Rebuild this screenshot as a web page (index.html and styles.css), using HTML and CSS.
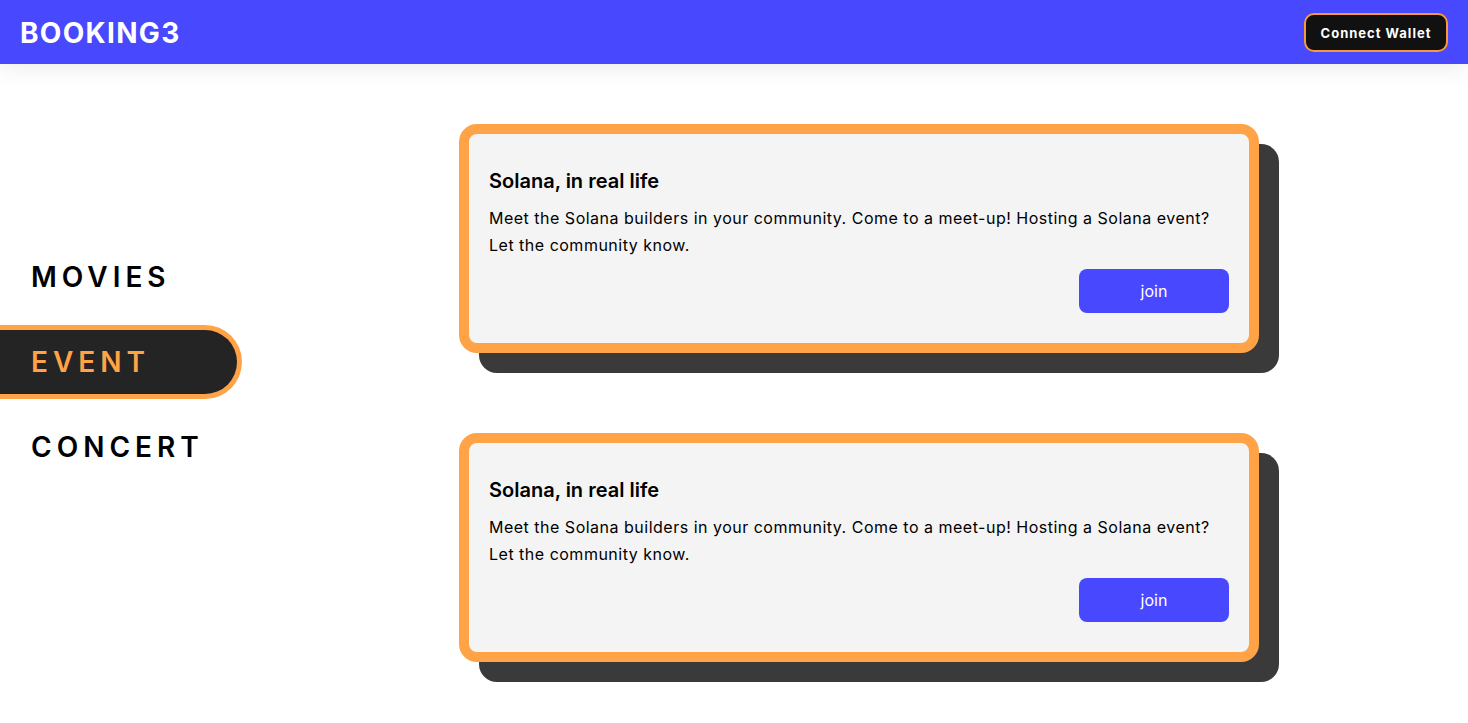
FILE: index.html
```html
<!DOCTYPE html>
<html lang="en">
<head>
<meta charset="utf-8">
<title>Booking3</title>
<link rel="stylesheet" href="styles.css">
</head>
<body>
<header class="topbar">
  <div class="logo">BOOKING3</div>
  <button class="wallet-btn">Connect Wallet</button>
</header>
<main class="layout">
  <nav class="sidebar">
    <div class="nav-item">MOVIES</div>
    <div class="nav-item active">EVENT</div>
    <div class="nav-item">CONCERT</div>
  </nav>
  <section class="cards">
    <article class="card">
      <h2 class="card-title">Solana, in real life</h2>
      <p class="card-text">Meet the Solana builders in your community. Come to a meet-up! Hosting a Solana event? Let the community know.</p>
      <div class="card-actions"><button class="join-btn">join</button></div>
    </article>
    <article class="card">
      <h2 class="card-title">Solana, in real life</h2>
      <p class="card-text">Meet the Solana builders in your community. Come to a meet-up! Hosting a Solana event? Let the community know.</p>
      <div class="card-actions"><button class="join-btn">join</button></div>
    </article>
  </section>
</main>
</body>
</html>
```

FILE: styles.css
```css
* { box-sizing: border-box; }
html, body {
  margin: 0;
  padding: 0;
  background: #ffffff;
  font-family: Inter, "Noto Sans", sans-serif;
  color: #000;
}
.topbar {
  height: 64px;
  background: #4848ff;
  display: flex;
  align-items: center;
  justify-content: space-between;
  padding: 0 20px 0 20px;
  box-shadow: 0 4px 24px rgba(0, 0, 0, 0.08);
  position: relative;
  z-index: 1;
}
.logo {
  color: #fff;
  font-size: 28px;
  font-weight: 700;
  letter-spacing: 1.3px;
  margin-top: 2px;
}
.wallet-btn {
  height: 39px;
  width: 144px;
  background: #111111;
  color: #fff;
  border: 2px solid #f7983a;
  border-radius: 10px;
  font-family: Inter, sans-serif;
  font-weight: 700;
  font-size: 13px;
  letter-spacing: 1px;
  padding: 0;
  margin-top: 1px;
}
.layout {
  display: flex;
  padding-bottom: 60px;
}
.sidebar {
  width: 459px;
  flex-shrink: 0;
  padding-top: 176px;
  display: flex;
  flex-direction: column;
  gap: 11px;
}
.nav-item {
  height: 74px;
  display: flex;
  align-items: center;
  padding-left: 31px;
  font-size: 28px;
  font-weight: 600;
  letter-spacing: 5px;
  color: #000;
}
.nav-item.active {
  width: 242px;
  background: #242424;
  color: #ffa346;
  border: 5px solid #ffa346;
  border-left: none;
  border-radius: 0 37px 37px 0;
}
.cards {
  padding-top: 60px;
  display: flex;
  flex-direction: column;
  gap: 80px;
}
.card {
  width: 800px;
  height: 229px;
  background: #f4f4f4;
  border: 10px solid #ffa346;
  border-radius: 18px;
  box-shadow: 20px 20px 0 #3a3a3a;
  padding: 33px 20px 30px 20px;
}
.card-title {
  margin: 0;
  font-size: 20px;
  font-weight: 600;
  line-height: 28px;
}
.card-text {
  margin: 10px 0 0 0;
  font-size: 16px;
  line-height: 27px;
  letter-spacing: 0.5px;
}
.card-actions {
  display: flex;
  justify-content: flex-end;
  margin-top: 10px;
}
.join-btn {
  width: 150px;
  height: 44px;
  background: #4848ff;
  color: #fff;
  border: none;
  border-radius: 8px;
  font-family: Inter, sans-serif;
  font-size: 16px;
}
```
